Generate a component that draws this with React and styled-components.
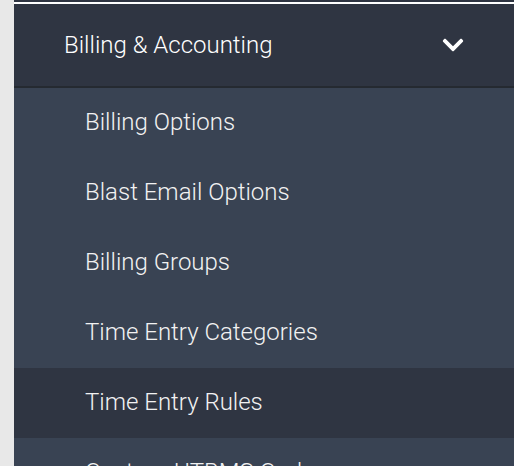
import React from "react";
import styled, { createGlobalStyle } from "styled-components";
import { FaChevronDown } from "react-icons/fa";

const Global = createGlobalStyle`
  html, body { margin: 0; padding: 0; background: #ffffff; }
  body { font-family: Roboto, "Liberation Sans", sans-serif; }
`;

const Page = styled.div`
  display: flex;
  width: 522px;
  height: 466px;
  overflow: hidden;
  background: #ffffff;
`;

const Gutter = styled.div`
  width: 14px;
  flex: none;
  background: #e8e8e8;
`;

const Panel = styled.nav`
  width: 500px;
  flex: none;
  display: flex;
  flex-direction: column;
  border-top: 2px solid #2f3542;
`;

const Spacer = styled.div`
  height: 2px;
  flex: none;
  background: #ffffff;
`;

const Header = styled.div`
  height: 82px;
  flex: none;
  display: flex;
  align-items: center;
  justify-content: space-between;
  padding: 0 50px 0 50px;
  background: #2f3542;
  border-bottom: 2px solid #252a31;
  color: #ffffff;
  font-size: 24px;
  font-weight: 300;
  box-sizing: content-box;
`;

const Chevron = styled(FaChevronDown)`
  width: 24px;
  height: 24px;
  color: #ffffff;
  margin-right: -1px;
`;

const SubList = styled.ul`
  list-style: none;
  margin: 0;
  padding: 0;
  flex: none;
  background: #394353;
`;

const Item = styled.li`
  height: 70px;
  display: flex;
  align-items: center;
  padding-left: 71px;
  padding-bottom: 3px;
  box-sizing: border-box;
  font-size: 24px;
  font-weight: 300;
  color: #f2f2f2;
  white-space: nowrap;
  background: ${(p) => (p.$active ? "#2f3542" : "transparent")};
`;

const items = [
  "Billing Options",
  "Blast Email Options",
  "Billing Groups",
  "Time Entry Categories",
  "Time Entry Rules",
  "Custom UTBMS Codes",
];

export default function App() {
  return (
    <>
      <Global />
      <Page>
        <Gutter />
        <Panel>
          <Spacer />
          <Header>
            <span>Billing &amp; Accounting</span>
            <Chevron />
          </Header>
          <SubList>
            {items.map((t, i) => (
              <Item key={t} $active={i === 4}>
                {t}
              </Item>
            ))}
          </SubList>
        </Panel>
      </Page>
    </>
  );
}
